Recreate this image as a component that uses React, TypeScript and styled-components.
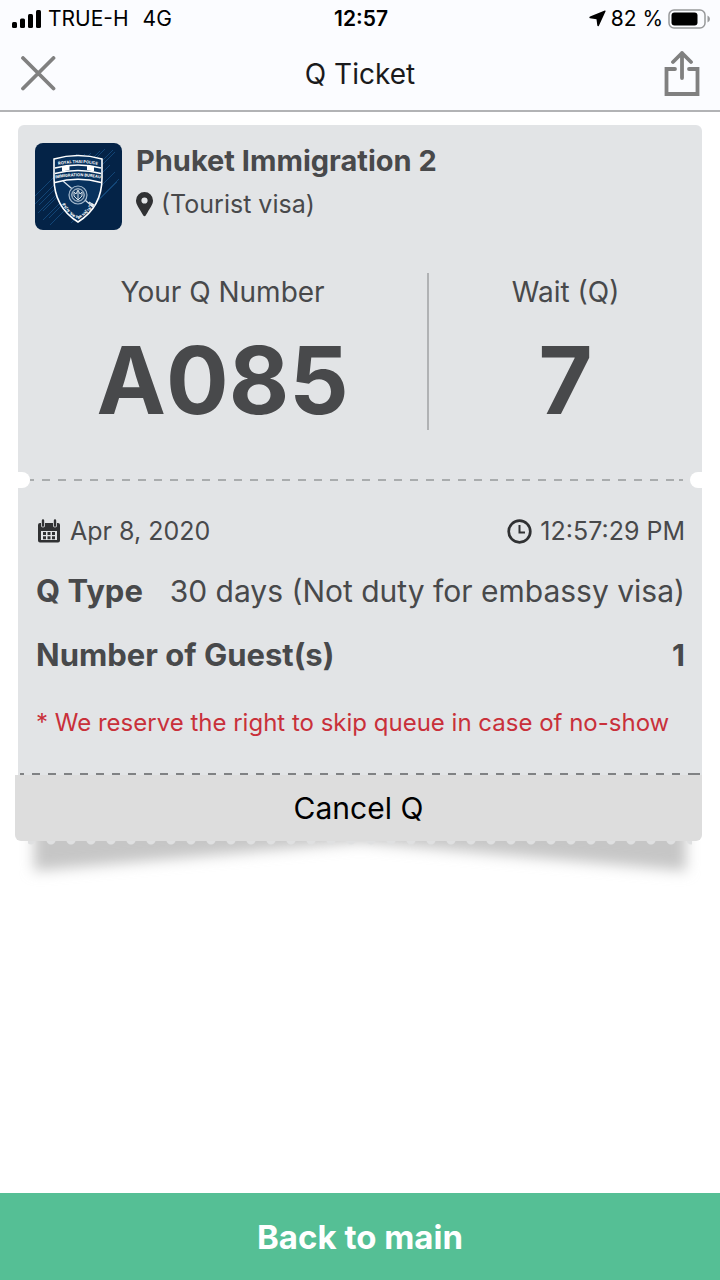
import React from "react";
import styled, { createGlobalStyle } from "styled-components";

const GlobalStyle = createGlobalStyle`
  * { box-sizing: border-box; }
  body { margin: 0; background: #fff; font-family: Inter, "Liberation Sans", sans-serif; color: #48494b; }
  button { font: inherit; border: 0; margin: 0; padding: 0; cursor: pointer; }
  h1, h2, p, dl, dt, dd { margin: 0; font-weight: inherit; font-size: inherit; }
  svg { display: block; flex: none; }
`;

const Page = styled.div`
  min-height: 100vh;
  display: flex;
  flex-direction: column;
`;

const Top = styled.header`
  background: #fbfcff;
  border-bottom: 2px solid #b2b3b5;
`;

const StatusBar = styled.div`
  display: grid;
  grid-template-columns: 1fr auto 1fr;
  align-items: center;
  height: 37px;
  padding: 0 10px 0 12px;
  font-size: 21px;
  color: #000;
`;

const StatusGroup = styled.div<{ $end?: boolean }>`
  display: flex;
  align-items: center;
  gap: ${(p) => (p.$end ? 5 : 6)}px;
  justify-content: ${(p) => (p.$end ? "flex-end" : "flex-start")};
`;

const Network = styled.span`
  margin-left: 8px;
`;

const Time = styled.time`
  font-weight: 600;
`;

const NavBar = styled.div`
  display: grid;
  grid-template-columns: 1fr auto 1fr;
  align-items: center;
  height: 73px;
  padding: 0 20px;
  color: #1a1a1c;
`;

const NavTitle = styled.h1`
  font-size: 28px;
`;

const IconButton = styled.button<{ $end?: boolean }>`
  background: none;
  justify-self: ${(p) => (p.$end ? "end" : "start")};
`;

const Content = styled.main`
  flex: 1;
  padding: 13px 18px 24px;
`;

const Ticket = styled.article`
  background: #e2e4e6;
  border-radius: 6px 6px 0 0;
`;

const Summary = styled.section`
  padding: 18px 0 50px;
`;

const Place = styled.div`
  display: flex;
  gap: 14px;
  padding: 0 17px;
`;

const PlaceName = styled.h2`
  font-size: 29px;
  line-height: 36px;
  font-weight: 700;
`;

const IconLine = styled.p`
  display: flex;
  align-items: center;
  gap: 8px;
  font-size: 25px;
  line-height: 32px;
`;

const PlaceNote = styled(IconLine)`
  margin-top: 9px;
`;

const Numbers = styled.dl`
  display: flex;
  margin-top: 43px;
`;

const NumberCell = styled.div<{ $grow: number }>`
  flex: ${(p) => p.$grow} 1 0;
  height: 157px;
  text-align: center;

  & + & {
    border-left: 2px solid #b0b2b4;
  }
`;

const NumberLabel = styled.dt`
  font-size: 28px;
  line-height: 38px;
`;

const NumberValue = styled.dd`
  margin-top: 19px;
  font-size: 93px;
  line-height: 100px;
  font-weight: 700;
`;

const Perforation = styled.div`
  display: flex;
  align-items: center;
  justify-content: space-between;
  height: 16px;
  margin-top: -8px;
  margin-bottom: -8px;
`;

const Notch = styled.span<{ $right?: boolean }>`
  width: 12px;
  height: 16px;
  background: #fff;
  border-radius: ${(p) => (p.$right ? "8px 0 0 8px" : "0 8px 8px 0")};
`;

const Dashes = styled.div<{ $color: string }>`
  height: 2px;
  margin: 0 2px;
  background: repeating-linear-gradient(90deg, ${(p) => p.$color} 0 8px, transparent 8px 16px) -4px 0;
`;

const PerforationDashes = styled(Dashes)`
  flex: 1;
  margin: 0 7px 0 0;
`;

const Details = styled.section`
  padding: 35px 17px 34px 18px;
`;

const Row = styled.div`
  display: flex;
  justify-content: space-between;
  align-items: center;
`;

const DetailList = styled.dl`
  display: grid;
  gap: 28px;
  margin-top: 26px;
  line-height: 36px;
`;

const Term = styled.dt`
  font-size: 31px;
  font-weight: 700;
`;

const Detail = styled.dd<{ $bold?: boolean }>`
  font-weight: ${(p) => (p.$bold ? 700 : 400)};
  font-size: 30px;
`;

const Warning = styled.p`
  margin-top: 34px;
  font-size: 24px;
  line-height: 32px;
  color: #c9303a;
`;

const CancelButton = styled.button`
  display: block;
  width: calc(100% + 3px);
  height: 66px;
  margin-left: -3px;
  background: #ddd;
  border-radius: 0 0 6px 6px;
  font-size: 30px;
  color: #000;
`;

const TornEdge = styled.div`
  display: grid;

  > * {
    grid-area: 1 / 1;
  }
`;

const Scallops = styled.div`
  z-index: 1;
  height: 4px;
  margin: 0 10px;
  background: radial-gradient(circle at 50% -1px, #dfe0e1 4px, transparent 5px) 13px 0 / 20px 4px repeat-x;
`;

const Shadow = styled.svg`
  width: 100%;
  height: 56px;
`;

const MainButton = styled.button`
  height: 87px;
  background: #55bf95;
  color: #fff;
  font-size: 33px;
  font-weight: 700;
`;

function Signal() {
  return (
    <svg width="30" height="20" viewBox="0 0 30 20" aria-hidden="true">
      <rect x="0" y="13" width="5" height="6" rx="1.5" />
      <rect x="8" y="9.5" width="5" height="9.5" rx="1.5" />
      <rect x="16" y="5" width="5" height="14" rx="1.5" />
      <rect x="24" y="1" width="5" height="18" rx="1.5" />
    </svg>
  );
}

function Location() {
  return (
    <svg width="17" height="17" viewBox="0 0 17 17" aria-hidden="true">
      <path d="M15.8.5 1 6.6Q-.3 7.400 1 8.200L7.500 9.300 8.300 15.600Q8.900 17 9.900 15.800L16.600 1.300Q16.700.2 15.800.5Z" />
    </svg>
  );
}

function Battery() {
  return (
    <svg width="42" height="20" viewBox="0 0 42 20" aria-hidden="true">
      <rect x="1" y="1" width="36" height="18" rx="5" fill="none" stroke="#98999b" strokeWidth="1.5" />
      <rect x="3.5" y="3.5" width="26" height="13" rx="3" />
      <path d="M39.5 6.500q2.500 1 2.500 3.500t-2.500 3.500z" fill="#98999b" />
    </svg>
  );
}

function CloseIcon() {
  return (
    <svg width="36" height="36" viewBox="0 0 36 36" fill="none" stroke="#808080" strokeWidth="3.8" strokeLinecap="round">
      <path d="M3 2 33.500 32.500M33.500 2 3 32.500" />
    </svg>
  );
}

function ShareIcon() {
  return (
    <svg width="36" height="46" viewBox="0 0 36 46" fill="none" stroke="#808080" strokeWidth="3.8" strokeLinecap="round" strokeLinejoin="round">
      <path d="M11 18H2.500V43H33.500V18H25" strokeLinejoin="miter" />
      <path d="M18 27V2M9 11 18 2 27 11" />
    </svg>
  );
}

function Emblem() {
  return (
    <svg width="87" height="87" viewBox="0 0 87 87" role="img" aria-label="Royal Thai Police Immigration Bureau">
      <defs>
        <clipPath id="tile"><rect width="87" height="87" rx="8" /></clipPath>
        <path id="arcTop" d="M18 23Q43.500 17 68 23" />
        <path id="arcMid" d="M18 36Q43 30.500 68 36" />
        <path id="arcLow" d="M22 50Q27 68 43 76Q59 68 64 50" />
      </defs>
      <g clipPath="url(#tile)">
        <rect width="87" height="87" fill="#042347" />
        <g stroke="#1d5d96" strokeWidth="1" opacity=".6">
          <path d="M0 61 50 11M3 70 65 8M8 77 78 7M44 65 80 29M54 67 82 39M15 82 75 22M0 53 42 11M36 80 60 56M4 62 56 10M14 75 80 9M50 70 84 36M8 68 70 6" />
        </g>
        <path d="M19 16Q43 9 67 16V35Q67 64 43 79 19 64 19 35Z" fill="#07315d" stroke="#fff" strokeWidth="1.6" />
        <path d="M20 25Q43 19 66 25M20 30.500Q43 24.500 66 30.500M20 39.500Q43 33 66 39.500" fill="none" stroke="#fff" strokeWidth="1.3" />
        <path d="M27 23.500 34.500 22V27L27 28.500ZM52 22 59 23.500V28.500L52 27Z" fill="#fff" />
        <path d="M28 38 58 64M54 59 60 63" stroke="#d8e2ea" strokeWidth="1.3" />
        <circle cx="43" cy="52" r="9" fill="#173f68" stroke="#a5bace" strokeWidth="1.2" />
        <circle cx="43" cy="52" r="6.2" fill="none" stroke="#d5e0e8" strokeWidth="1" />
        <path d="M39 49v4l4 4 4-4v-4l-2 2-2-4-2 4zM43 48v9" fill="none" stroke="#d5e0e8" strokeWidth="1" />
        <g fill="#fff" fontSize="4" fontWeight="700">
          <text><textPath href="#arcTop" startOffset="50%" textAnchor="middle">ROYAL THAI POLICE</textPath></text>
          <text><textPath href="#arcMid" startOffset="50%" textAnchor="middle">IMMIGRATION BUREAU</textPath></text>
          <text><textPath href="#arcLow" startOffset="50%" textAnchor="middle">สำนักงานตรวจคนเข้าเมือง</textPath></text>
        </g>
      </g>
    </svg>
  );
}

function PinIcon() {
  return (
    <svg width="17" height="25" viewBox="0 0 17 25" aria-hidden="true">
      <path fillRule="evenodd" fill="#303133" d="M8.500 0a8.500 8.500 0 0 1 8.500 8.500c0 4-3 7.500-5.500 12L9.700 23.500Q8.500 25 7.300 23.500L5.500 20.500C3 16 0 12.500 0 8.500a8.500 8.500 0 0 1 8.500-8.500Zm0 5.400a3.100 3.100 0 1 0 0 6.200 3.100 3.100 0 0 0 0-6.200Z" />
    </svg>
  );
}

function CalendarIcon() {
  return (
    <svg width="26" height="24" viewBox="0 0 26 24" aria-hidden="true">
      <path fill="#303133" fillRule="evenodd" d="M5 4V6.500a2 2 0 0 0 4 0V4h8v2.500a2 2 0 0 0 4 0V4h1q2 0 2 2V21.500q0 2-2 2H4q-2 0-2-2V6q0-2 2-2ZM5 12V21H21V12Z" />
      <path stroke="#303133" strokeWidth="2.4" strokeLinecap="round" d="M7 1.500V6.500M19 1.500V6.500" />
      <path fill="#303133" d="M7 13h3v3H7zM11.500 13h3v3h-3zM16 13h3v3h-3zM7 17.200h3v3H7zM11.500 17.200h3v3h-3zM16 17.200h3v3h-3z" />
    </svg>
  );
}

function ClockIcon() {
  return (
    <svg width="25" height="25" viewBox="0 0 25 25" fill="none" stroke="#303133" aria-hidden="true">
      <circle cx="12.5" cy="12.5" r="10.8" strokeWidth="2.7" />
      <path d="M12.500 6V13.500H18" strokeWidth="2" />
    </svg>
  );
}

export default function App() {
  return (
    <Page>
      <GlobalStyle />
      <Top>
        <StatusBar>
          <StatusGroup>
            <Signal />
            <span>TRUE-H</span>
            <Network>4G</Network>
          </StatusGroup>
          <Time>12:57</Time>
          <StatusGroup $end>
            <Location />
            <span>82 %</span>
            <Battery />
          </StatusGroup>
        </StatusBar>
        <NavBar>
          <IconButton aria-label="Close"><CloseIcon /></IconButton>
          <NavTitle>Q Ticket</NavTitle>
          <IconButton $end aria-label="Share"><ShareIcon /></IconButton>
        </NavBar>
      </Top>
      <Content>
        <Ticket>
          <Summary>
            <Place>
              <Emblem />
              <div>
                <PlaceName>Phuket Immigration 2</PlaceName>
                <PlaceNote><PinIcon />(Tourist visa)</PlaceNote>
              </div>
            </Place>
            <Numbers>
              <NumberCell $grow={3}>
                <NumberLabel>Your Q Number</NumberLabel>
                <NumberValue>A085</NumberValue>
              </NumberCell>
              <NumberCell $grow={2}>
                <NumberLabel>Wait (Q)</NumberLabel>
                <NumberValue>7</NumberValue>
              </NumberCell>
            </Numbers>
          </Summary>
          <Perforation>
            <Notch />
            <PerforationDashes $color="#a9acad" />
            <Notch $right />
          </Perforation>
          <Details>
            <Row>
              <IconLine><CalendarIcon />Apr 8, 2020</IconLine>
              <IconLine><ClockIcon />12:57:29 PM</IconLine>
            </Row>
            <DetailList>
              <Row>
                <Term>Q Type</Term>
                <Detail>30 days (Not duty for embassy visa)</Detail>
              </Row>
              <Row>
                <Term>Number of Guest(s)</Term>
                <Detail $bold>1</Detail>
              </Row>
            </DetailList>
            <Warning>* We reserve the right to skip queue in case of no-show</Warning>
          </Details>
          <Dashes $color="#808284" />
        </Ticket>
        <CancelButton>Cancel Q</CancelButton>
        <TornEdge>
          <Scallops />
          <Shadow viewBox="0 0 684 56" preserveAspectRatio="none" aria-hidden="true">
            <defs>
              <filter id="soft" x="-10%" y="-100%" width="120%" height="300%">
                <feGaussianBlur stdDeviation="7" />
              </filter>
            </defs>
            <path d="M16-30H668V30L342 1 16 30Z" fill="#c6c6c6" filter="url(#soft)" />
          </Shadow>
        </TornEdge>
      </Content>
      <MainButton>Back to main</MainButton>
    </Page>
  );
}
